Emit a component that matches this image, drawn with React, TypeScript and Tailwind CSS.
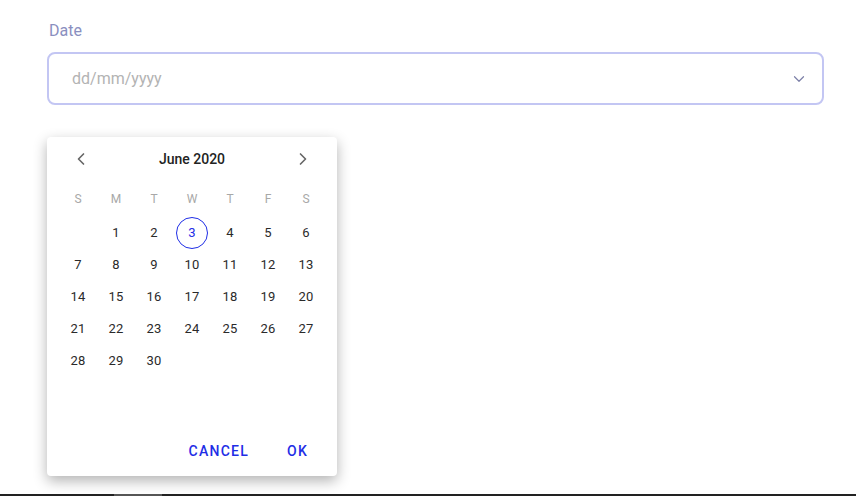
import { ChevronDown, ChevronLeft, ChevronRight } from "lucide-react";

const weekdays = ["S", "M", "T", "W", "T", "F", "S"];

// June 2020 starts on a Monday
const days: (number | null)[] = [null, ...Array.from({ length: 30 }, (_, i) => i + 1)];

export default function App() {
  return (
    <div className="relative h-[496px] w-[856px] overflow-hidden bg-white font-['Roboto',sans-serif]">
      <div className="pl-[47px] pr-[32px] pt-[21px]">
        <label className="block pl-[2px] text-[16px] leading-5 text-[#8a8fc0]">Date</label>
        <div className="mt-[11px] flex h-[53px] items-center justify-between rounded-lg border-2 border-[#c3c6f3] pl-[23px] pr-[14px]">
          <span className="text-[16px] text-[#b3b3b3]">dd/mm/yyyy</span>
          <ChevronDown className="h-[18px] w-[18px] text-[#7d80a8]" strokeWidth={1.6} />
        </div>

        {/* Date picker popup */}
        <div className="mt-[32px] flex h-[339px] w-[290px] flex-col rounded bg-white px-3 shadow-[0_5px_14px_rgba(0,0,0,0.3)]">
          <div className="mt-[11px] flex h-[22px] items-center justify-between px-[12px]">
            <ChevronLeft className="h-5 w-5 text-[#666]" strokeWidth={2} />
            <span className="text-[14px] font-medium text-[#222]">June 2020</span>
            <ChevronRight className="h-5 w-5 text-[#666]" strokeWidth={2} />
          </div>

          <div className="mt-[20px] grid grid-cols-7">
            {weekdays.map((d, i) => (
              <div key={i} className="flex h-[18px] items-center justify-center text-[12px] text-[#a8a8a8]">
                {d}
              </div>
            ))}
          </div>

          <div className="mt-[9px] grid grid-cols-7">
            {days.map((d, i) => (
              <div key={i} className="flex h-8 items-center justify-center">
                {d !== null &&
                  (d === 3 ? (
                    <span className="flex h-8 w-8 items-center justify-center rounded-full border border-[#1f2ee6] text-[13px] text-[#1f2ee6]">
                      {d}
                    </span>
                  ) : (
                    <span className="text-[13px] tracking-[0.3px] text-[#2a2a2a]">{d}</span>
                  ))}
              </div>
            ))}
          </div>

          <div className="mt-auto mb-[14px] flex justify-end gap-[38px] pr-[17px]">
            <button className="text-[14px] font-medium tracking-[1.25px] text-[#1f2ee6]">CANCEL</button>
            <button className="text-[14px] font-medium tracking-[1.25px] text-[#1f2ee6]">OK</button>
          </div>
        </div>
      </div>

      {/* bottom edge strip */}
      <div className="absolute bottom-0 left-0 h-[2px] w-full bg-[#222]">
        <div className="ml-[114px] h-full w-[48px] bg-[#555]" />
      </div>
    </div>
  );
}
